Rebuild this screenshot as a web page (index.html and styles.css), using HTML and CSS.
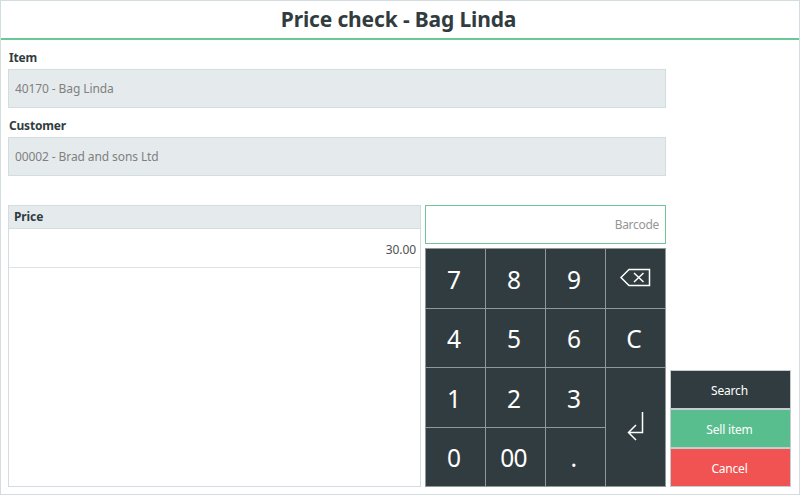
FILE: index.html
```html
<!DOCTYPE html>
<html lang="en">
<head>
    <meta charset="UTF-8">
    <meta name="viewport" content="width=device-width, initial-scale=1.0">
    <title>Price check - Bag Linda</title>
    <link rel="stylesheet" href="styles.css">
</head>
<body>
    <div class="window">
        <h1 class="title">Price check - Bag Linda</h1>

        <div class="content">
            <div class="main">
                <label class="label" for="item">Item</label>
                <input class="field" type="text" id="item" value="40170 - Bag Linda" readonly>
                <label class="label" for="customer">Customer</label>
                <input class="field field-customer" type="text" id="customer" value="00002 - Brad and sons Ltd" readonly>

                <div class="panels">
                    <div class="prices">
                        <div class="prices-head">Price</div>
                        <div class="prices-row">30.00</div>
                    </div>

                    <div class="entry">
                        <input class="barcode" type="text" id="barcode" placeholder="Barcode">
                        <div class="keypad">
                            <button class="key">7</button>
                            <button class="key">8</button>
                            <button class="key">9</button>
                            <button class="key" aria-label="Backspace">
                                <svg class="icon-back" width="32" height="20" viewBox="0 0 32 20">
                                    <path d="M10 1.5H30.5V17.5H10L2 9.5Z"/>
                                    <path d="M15 5L24.5 14M24.5 5L15 14"/>
                                </svg>
                            </button>
                            <button class="key">4</button>
                            <button class="key">5</button>
                            <button class="key">6</button>
                            <button class="key">C</button>
                            <button class="key">1</button>
                            <button class="key">2</button>
                            <button class="key">3</button>
                            <button class="key key-enter" aria-label="Enter">
                                <svg class="icon-enter" width="17" height="31" viewBox="0 0 17 31">
                                    <path d="M15.5 1V21.5H2M9 14L1.5 21.5L9 29"/>
                                </svg>
                            </button>
                            <button class="key">0</button>
                            <button class="key">00</button>
                            <button class="key">.</button>
                        </div>
                    </div>
                </div>
            </div>

            <div class="actions">
                <button class="btn btn-search">Search</button>
                <button class="btn btn-sell">Sell item</button>
                <button class="btn btn-cancel">Cancel</button>
            </div>
        </div>
    </div>
</body>
</html>
```
FILE: styles.css
```css
* {
    box-sizing: border-box;
}

body {
    margin: 0;
    font-family: 'Segoe UI', 'Noto Sans', sans-serif;
    font-size: 12px;
    letter-spacing: -0.1px;
    color: #313c40;
    background: #fff;
}

input,
button {
    font-family: inherit;
    font-size: inherit;
    letter-spacing: inherit;
    border-radius: 0;
    outline: none;
    margin: 0;
}

.window {
    height: 100vh;
    display: flex;
    flex-direction: column;
    border: 1px solid #d3dcdf;
}

.title {
    height: 39px;
    margin: 0;
    border-bottom: 2px solid #6ac796;
    font-size: 21px;
    line-height: 37px;
    letter-spacing: -0.15px;
    text-align: center;
    padding-right: 3px;
}

.content {
    flex: 1;
    display: flex;
    gap: 4px;
    padding: 8px 8px 7px 7px;
}

.main {
    width: 658px;
    display: flex;
    flex-direction: column;
}

.label {
    height: 21px;
    padding-left: 1px;
    line-height: 19px;
    font-weight: bold;
    letter-spacing: -0.2px;
}

.field {
    height: 39px;
    padding: 0 6px;
    border: 1px solid #d3dcdf;
    background: #e5ebed;
    color: #808080;
}

.field + .label {
    margin-top: 8px;
}

.field-customer {
    margin-bottom: 29px;
}

.panels {
    flex: 1;
    display: flex;
    gap: 4px;
}

.prices {
    flex: 1;
    border: 1px solid #d3dcdf;
}

.prices-head {
    height: 23px;
    padding: 0 5px;
    line-height: 22px;
    font-weight: bold;
    background: #e5ebed;
    border-bottom: 1px solid #d3dcdf;
}

.prices-row {
    height: 39px;
    padding: 0 4px;
    line-height: 41px;
    text-align: right;
    color: #505050;
    border-bottom: 1px solid #dce4e6;
}

.entry {
    width: 241px;
    display: flex;
    flex-direction: column;
    gap: 4px;
}

.barcode {
    width: 100%;
    height: 39px;
    padding: 0 6px;
    border: 1px solid #6fc799;
    text-align: right;
    letter-spacing: -0.3px;
}

.barcode::placeholder {
    color: #969696;
}

.keypad {
    flex: 1;
    display: grid;
    grid-template-columns: repeat(4, 1fr);
    grid-template-rows: repeat(4, 1fr);
    gap: 1px;
    padding: 1px;
    background: #92989a;
}

.key {
    display: flex;
    align-items: center;
    justify-content: center;
    padding: 3px 4px 0 0;
    border: none;
    background: #313c40;
    color: #fff;
    font-size: 24.5px;
    line-height: 1;
    letter-spacing: -0.8px;
}

.key-enter {
    grid-row: span 2;
}

.key svg {
    fill: none;
    stroke: #fff;
    stroke-width: 1.5;
}

.icon-back {
    margin: -4px -2px 0 0;
}

.icon-enter {
    margin: -5px -4px 0 0;
}

.actions {
    flex: 1;
    display: flex;
    flex-direction: column;
    justify-content: flex-end;
}

.btn {
    height: 39px;
    padding: 1px 2px 0 0;
    border: 1px solid #c3cdd0;
    color: #fff;
    letter-spacing: -0.2px;
}

.btn-search {
    background: #313c40;
}

.btn-sell {
    background: #58be8e;
}

.btn-cancel {
    background: #f15352;
}
```
